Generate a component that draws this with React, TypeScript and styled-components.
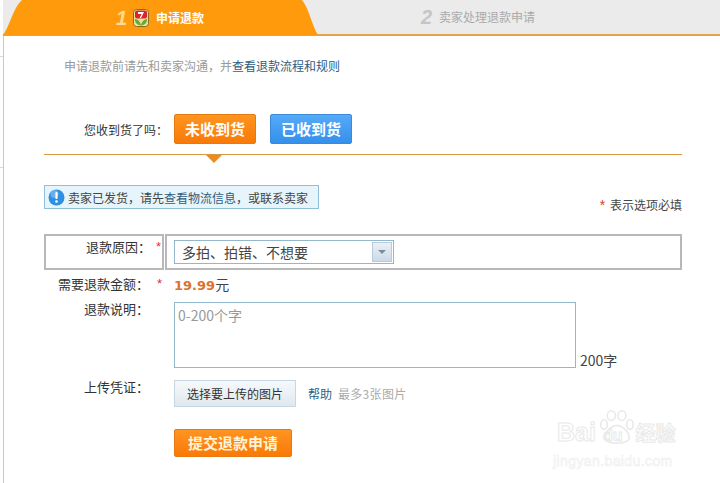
import React from 'react'
import styled, { createGlobalStyle } from 'styled-components'

const GlobalStyle = createGlobalStyle`
  html, body { margin: 0; padding: 0; background: #fff; }
  body { font-family: "Noto Sans CJK SC", "Liberation Sans", sans-serif; font-size: 12px; color: #444; }
  * { box-sizing: border-box; }
`

const Page = styled.div`
  position: relative;
  display: flex;
  width: 720px;
  height: 483px;
  overflow: hidden;
  background: #fff;
`

const Gutter = styled.div`
  flex: 0 0 3px;
  padding-top: 56px;
`

const Tick = styled.div<{ $gap: number }>`
  height: 1px;
  margin-bottom: ${p => p.$gap}px;
  background: #d8d8d8;
`

const Panel = styled.div`
  flex: 1;
  min-width: 0;
`

const Tabs = styled.div`
  display: flex;
  height: 36px;
  background: #ebebeb;
  border-bottom: 2px solid #e9a24a;
`

const ActiveTab = styled.div`
  display: flex;
  align-items: center;
  flex: 0 0 315px;
  height: 35px;
  padding-left: 113px;
  background: #ff9a0c;
  clip-path: path('M0 35 C6 28 10 8 19 0 L299 0 C306 8 309 26 315 35 Z');
`

const StepNumber = styled.span<{ $active?: boolean }>`
  width: ${p => (p.$active ? '17px' : '18px')};
  font-family: "Liberation Sans", sans-serif;
  font-style: italic;
  font-weight: bold;
  font-size: 20px;
  line-height: 34px;
  color: ${p => (p.$active ? '#ffdb94' : '#c6c6c6')};
`

const StepLabel = styled.span<{ $active?: boolean }>`
  font-size: 12px;
  line-height: 34px;
  font-weight: ${p => (p.$active ? 'bold' : 'normal')};
  color: ${p => (p.$active ? '#fff' : '#aaa')};
`

const IdleTab = styled.div`
  display: flex;
  align-items: center;
  height: 34px;
  padding-left: 103px;
`

const TabLogo = styled.svg`
  flex: none;
  width: 16px;
  height: 18px;
  margin-right: 7px;
`

const Content = styled.div`
  position: relative;
  padding: 0 38px 0 40px;
  border-left: 1px solid #c8c8c8;
  height: 447px;
`

const Intro = styled.p`
  margin: 0;
  padding: 21px 0 0 20px;
  line-height: 18px;
  color: #999;
`

const Link = styled.a`
  color: #2f5d80;
  text-decoration: none;
`

const QuestionRow = styled.div`
  display: flex;
  align-items: center;
  height: 30px;
  margin-top: 39px;
`

const QuestionLabel = styled.span`
  width: 130px;
  padding-left: 40px;
  color: #333;
  white-space: nowrap;
`

const ToggleButton = styled.button<{ $tone: 'orange' | 'blue' }>`
  width: 82px;
  height: 30px;
  margin-right: 14px;
  padding: 0 0 2px;
  border: 1px solid ${p => (p.$tone === 'orange' ? '#e67a10' : '#3a8ad8')};
  border-radius: 2px;
  background: ${p =>
    p.$tone === 'orange'
      ? 'linear-gradient(#ff9420, #f97a08)'
      : 'linear-gradient(#55aaf8, #3590ec)'};
  color: #fff;
  font: bold 15px "Noto Sans CJK SC", sans-serif;
`

const Divider = styled.div`
  position: relative;
  height: 1px;
  margin-top: 10px;
  background: #d9973f;
`

const DividerArrow = styled.span`
  position: absolute;
  left: 162px;
  top: 1px;
  border-style: solid;
  border-width: 8px 8px 0;
  border-color: #ef8a1c transparent transparent;
`

const NoticeRow = styled.div`
  display: flex;
  align-items: flex-end;
  justify-content: space-between;
  margin-top: 30px;
`

const Notice = styled.div`
  display: flex;
  align-items: center;
  width: 275px;
  height: 24px;
  padding-left: 3px;
  border: 1px solid #8fc0d8;
  background: #e6f4fb;
  color: #444;
`

const InfoIcon = styled.svg`
  flex: none;
  width: 17px;
  height: 17px;
  margin-right: 3px;
`

const RequiredNote = styled.span`
  line-height: 16px;
  margin-bottom: -4px;
  color: #444;
`

const Star = styled.span`
  color: #d33;
  font-family: "Liberation Sans", sans-serif;
`

const RequiredStar = styled(Star)`
  font-size: 14px;
  margin-right: 2px;
`

const ReasonBox = styled.div`
  display: grid;
  grid-template-columns: 120px 1fr;
  height: 36px;
  margin-top: 25px;
`

const ReasonCell = styled.div`
  display: flex;
  align-items: flex-start;
  border: 2px solid #b8b8b8;
  background: #fff;
`

const ReasonLabelCell = styled(ReasonCell)`
  justify-content: flex-end;
  padding: 2px 0 0;
`

const ReasonControlCell = styled(ReasonCell)`
  align-items: center;
  padding-left: 7px;
  margin-left: 1px;
`

const FieldText = styled.span`
  font-size: 13px;
  line-height: 18px;
  color: #333;
  white-space: nowrap;
`

const Select = styled.div`
  display: flex;
  align-items: center;
  justify-content: space-between;
  width: 220px;
  height: 24px;
  padding: 0 1px 0 7px;
  border: 1px solid #93b8cd;
  font-size: 14px;
  color: #444;
`

const SelectArrow = styled.span`
  display: flex;
  align-items: center;
  justify-content: center;
  width: 20px;
  height: 20px;
  border: 1px solid #b6cbdc;
  background: linear-gradient(#eaf0f6, #ccdae6);

  &::after {
    content: '';
    border-style: solid;
    border-width: 4px 4px 0;
    border-color: #7d8c9c transparent transparent;
  }
`

const FieldRow = styled.div<{ $top: number }>`
  display: grid;
  grid-template-columns: 105px 25px 1fr;
  margin-top: ${p => p.$top}px;
`

const FieldLabel = styled(FieldText)<{ $tight?: boolean }>`
  text-align: right;
  line-height: ${p => (p.$tight ? '14px' : '18px')};
`

const FieldStar = styled(Star)`
  padding-left: 8px;
  line-height: 18px;
  font-size: 13px;
`

const ReasonStar = styled(FieldStar)`
  padding-left: 5px;
  padding-right: 1px;
`

const Amount = styled.span`
  display: block;
  height: 18px;
  overflow: hidden;
  font-size: 14px;
  line-height: 18px;
  color: #444;

  b {
    font-family: "DejaVu Sans", sans-serif;
    font-size: 13px;
    line-height: 18px;
    color: #e0702a;
  }
`

const TextareaWrap = styled.div`
  display: flex;
  align-items: flex-end;
  gap: 4px;
`

const Textarea = styled.div`
  width: 402px;
  height: 66px;
  padding: 2px 3px;
  border: 1px solid #93b8cd;
  font-size: 14px;
  line-height: 20px;
  color: #999;
`

const Counter = styled.span`
  font-size: 14px;
  line-height: 16px;
  color: #444;
`

const UploadWrap = styled.div`
  display: flex;
  align-items: center;
`

const UploadButton = styled.button`
  width: 122px;
  height: 27px;
  margin-right: 12px;
  padding: 0;
  border: 1px solid #c8d6e1;
  background: linear-gradient(#f6f9fb, #dfe8ef);
  color: #333;
  font: 12px "Noto Sans CJK SC", sans-serif;
`

const Hint = styled.span`
  margin-left: 6px;
  letter-spacing: 0.3px;
  color: #aaa;
`

const SubmitButton = styled.button`
  display: block;
  width: 118px;
  height: 28px;
  margin: 22px 0 0 130px;
  padding: 0 0 2px;
  border: 1px solid #e67a10;
  border-radius: 2px;
  background: linear-gradient(#ff9420, #f97a08);
  color: #fff3d8;
  font: bold 15px "Noto Sans CJK SC", sans-serif;
`

const Watermark = styled.div`
  position: absolute;
  left: 553px;
  top: 405px;
  width: 130px;
  color: transparent;
  font-family: "Liberation Sans", sans-serif;
  -webkit-text-stroke: 1px #e9e9e9;
`

const WatermarkLine = styled.div`
  display: flex;
  align-items: baseline;
  margin-top: 12px;
  padding-left: 4px;
  font-size: 25px;
  font-weight: bold;
  line-height: 30px;
`

const WatermarkBrand = styled.span`
  font-family: "Noto Sans CJK SC", sans-serif;
  font-size: 20px;
  margin-left: 13px;
`

const WatermarkDu = styled.span`
  font-size: 16px;
  margin-left: 7px;
`

const WatermarkUrl = styled.div`
  margin-top: 2px;
  font-size: 14px;
  letter-spacing: 0.4px;
  line-height: 16px;
  font-weight: normal;
  -webkit-text-stroke: 0.6px #eeeeee;
`

const Paw = styled.svg`
  position: absolute;
  left: 47px;
  top: 2px;
  width: 34px;
  height: 40px;
`

export default function App() {
  return (
    <Page>
      <GlobalStyle />
      <Gutter>
        <Tick $gap={110} />
        <Tick $gap={0} />
      </Gutter>
      <Panel>
        <Tabs>
          <ActiveTab>
            <StepNumber $active>1</StepNumber>
            <TabLogo viewBox="0 0 16 18">
              <rect x="0.5" y="0.5" width="15" height="17" rx="3" fill="#e8e2a0" stroke="#8a6a20" />
              <rect x="2" y="1.5" width="12" height="8" rx="2" fill="#d8262a" />
              <path d="M5 3 H11 L8 9 H6.5 L8.6 5 H5 Z" fill="#fff" />
              <path d="M2 10 C4 10 7 12 8 16 C9 12 12 10 14 10 C14 14 12 16 8 16.5 C4 16 2 14 2 10 Z" fill="#6aa82e" />
            </TabLogo>
            <StepLabel $active>申请退款</StepLabel>
          </ActiveTab>
          <IdleTab>
            <StepNumber>2</StepNumber>
            <StepLabel>卖家处理退款申请</StepLabel>
          </IdleTab>
        </Tabs>
        <Content>
          <Intro>
            申请退款前请先和卖家沟通，并<Link>查看退款流程和规则</Link>
          </Intro>

          <QuestionRow>
            <QuestionLabel>您收到货了吗：</QuestionLabel>
            <ToggleButton $tone="orange">未收到货</ToggleButton>
            <ToggleButton $tone="blue">已收到货</ToggleButton>
          </QuestionRow>

          <Divider>
            <DividerArrow />
          </Divider>

          <NoticeRow>
            <Notice>
              <InfoIcon viewBox="0 0 17 17">
                <circle cx="8.5" cy="8.5" r="8" fill="#2f8fe0" />
                <circle cx="6.5" cy="5" r="4" fill="#8cc8f5" opacity="0.6" />
                <rect x="7.4" y="3" width="2.2" height="7" rx="1" fill="#fff" />
                <circle cx="8.5" cy="12.5" r="1.3" fill="#fff" />
              </InfoIcon>
              <span>
                卖家已发货，请先<Link>查看物流信息</Link>，或联系卖家
              </span>
            </Notice>
            <RequiredNote>
              <RequiredStar>*</RequiredStar> 表示选项必填
            </RequiredNote>
          </NoticeRow>

          <ReasonBox>
            <ReasonLabelCell>
              <FieldText>退款原因：</FieldText>
              <ReasonStar>*</ReasonStar>
            </ReasonLabelCell>
            <ReasonControlCell>
              <Select>
                多拍、拍错、不想要
                <SelectArrow />
              </Select>
            </ReasonControlCell>
          </ReasonBox>

          <FieldRow $top={5}>
            <FieldLabel>需要退款金额：</FieldLabel>
            <FieldStar>*</FieldStar>
            <Amount>
              <b>19.99</b>元
            </Amount>
          </FieldRow>

          <FieldRow $top={9}>
            <FieldLabel $tight>退款说明：</FieldLabel>
            <span />
            <TextareaWrap>
              <Textarea>0-200个字</Textarea>
              <Counter>200字</Counter>
            </TextareaWrap>
          </FieldRow>

          <FieldRow $top={12}>
            <FieldLabel $tight>上传凭证：</FieldLabel>
            <span />
            <UploadWrap>
              <UploadButton>选择要上传的图片</UploadButton>
              <Link>帮助</Link>
              <Hint>最多3张图片</Hint>
            </UploadWrap>
          </FieldRow>

          <SubmitButton>提交退款申请</SubmitButton>
        </Content>
      </Panel>
      <Watermark>
        <Paw viewBox="0 0 42 44" fill="none" stroke="#e9e9e9" strokeWidth="2">
          <ellipse cx="14" cy="8" rx="5" ry="6" />
          <ellipse cx="27" cy="8" rx="5" ry="6" />
          <ellipse cx="5" cy="19" rx="4" ry="6" />
          <ellipse cx="37" cy="19" rx="4" ry="6" />
          <path d="M6 36 C6 26 16 20 21 20 C26 20 36 26 36 36 C36 44 6 44 6 36 Z" />
        </Paw>
        <WatermarkLine>
          Bai<WatermarkDu>du</WatermarkDu>
          <WatermarkBrand>经验</WatermarkBrand>
        </WatermarkLine>
        <WatermarkUrl>jingyan.baidu.com</WatermarkUrl>
      </Watermark>
    </Page>
  )
}
